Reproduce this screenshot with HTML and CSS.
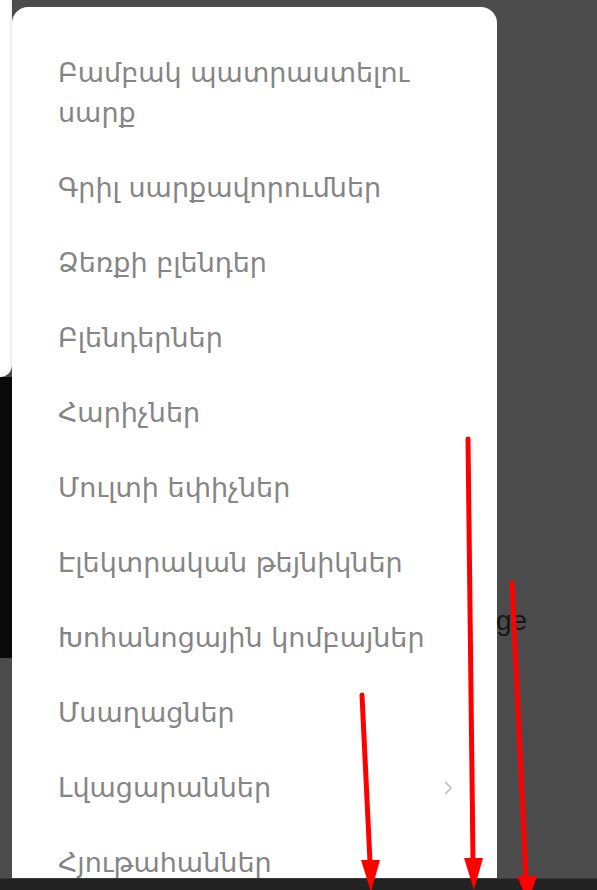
FILE: index.html
```html
<!DOCTYPE html>
<html lang="hy">
<head>
    <meta charset="UTF-8">
    <title>Կատեգորիաներ</title>
    <link rel="stylesheet" href="styles.css">
</head>
<body>
    <div class="screen">
        <!-- Page behind the overlay -->
        <div class="side">
            <div class="side-top"></div>
            <div class="side-dark"></div>
        </div>

        <!-- Category menu -->
        <div class="menu">
            <div class="menu-item">Բամբակ պատրաստելու սարք</div>
            <div class="menu-item">Գրիլ սարքավորումներ</div>
            <div class="menu-item">Ձեռքի բլենդեր</div>
            <div class="menu-item">Բլենդերներ</div>
            <div class="menu-item">Հարիչներ</div>
            <div class="menu-item">Մուլտի եփիչներ</div>
            <div class="menu-item">Էլեկտրական թեյնիկներ</div>
            <div class="menu-item">Խոհանոցային կոմբայներ</div>
            <div class="menu-item">Մսաղացներ</div>
            <div class="menu-item has-sub">Լվացարաններ
                <svg class="chevron" width="10" height="16" viewBox="0 0 10 16"><path d="M2 2l6 6-6 6" fill="none" stroke="#bbb" stroke-width="1.6"/></svg>
            </div>
            <div class="menu-item">Հյութահաններ</div>
        </div>

        <div class="rest">
            <span class="peek">ge</span>
        </div>
    </div>
    <div class="bottom-bar"></div>

    <!-- annotation arrows drawn over the screenshot -->
    <svg class="marks" width="597" height="890" viewBox="0 0 597 890">
        <g stroke="#ff0000" stroke-width="5" stroke-linecap="round" fill="none">
            <path d="M362 695 L370 862"/>
            <path d="M468 439 L473 860"/>
            <path d="M512 583 L526 878"/>
        </g>
        <g fill="#ff0000">
            <polygon points="361,860 380,860 371,892"/>
            <polygon points="464,858 483,858 474,890"/>
            <polygon points="517,876 537,876 528,902"/>
        </g>
    </svg>
</body>
</html>
```

FILE: styles.css
```css
/* Base */
body {
    margin: 0;
    width: 597px;
    height: 890px;
    overflow: hidden;
    position: relative;
    background: #4b4b4b;
    font-family: 'DejaVu Sans', sans-serif;
}

.screen {
    display: flex;
    height: 878px;
    overflow: hidden;
}

/* left strip of the page under the menu */
.side {
    width: 12px;
    flex-shrink: 0;
}

.side-top {
    height: 377px;
    background: linear-gradient(to right, #fff 70%, #ececec);
    border-bottom-right-radius: 12px;
}

.side-dark {
    height: 281px;
    background: #0a0a0a;
}

/* menu panel */
.menu {
    width: 485px;
    flex-shrink: 0;
    margin-top: 7px;
    padding: 28px 44px 0 46px;
    box-sizing: border-box;
    background: #fff;
    border-radius: 16px 16px 0 0;
}

.menu-item {
    display: flex;
    align-items: center;
    justify-content: space-between;
    padding: 17.5px 0;
    font-size: 27px;
    line-height: 40px;
    color: #858585;
}

.chevron {
    flex-shrink: 0;
}

.rest {
    flex: 1;
    padding-top: 605px;
}

.peek {
    display: block;
    margin-left: -1px;
    font-family: 'Liberation Sans', Arial, sans-serif;
    font-size: 28px;
    color: #161616;
}

.bottom-bar {
    height: 12px;
    background: #222;
    border-top: 1px solid #383838;
    box-sizing: border-box;
}

.marks {
    position: absolute;
    left: 0;
    top: 0;
    pointer-events: none;
}
```
